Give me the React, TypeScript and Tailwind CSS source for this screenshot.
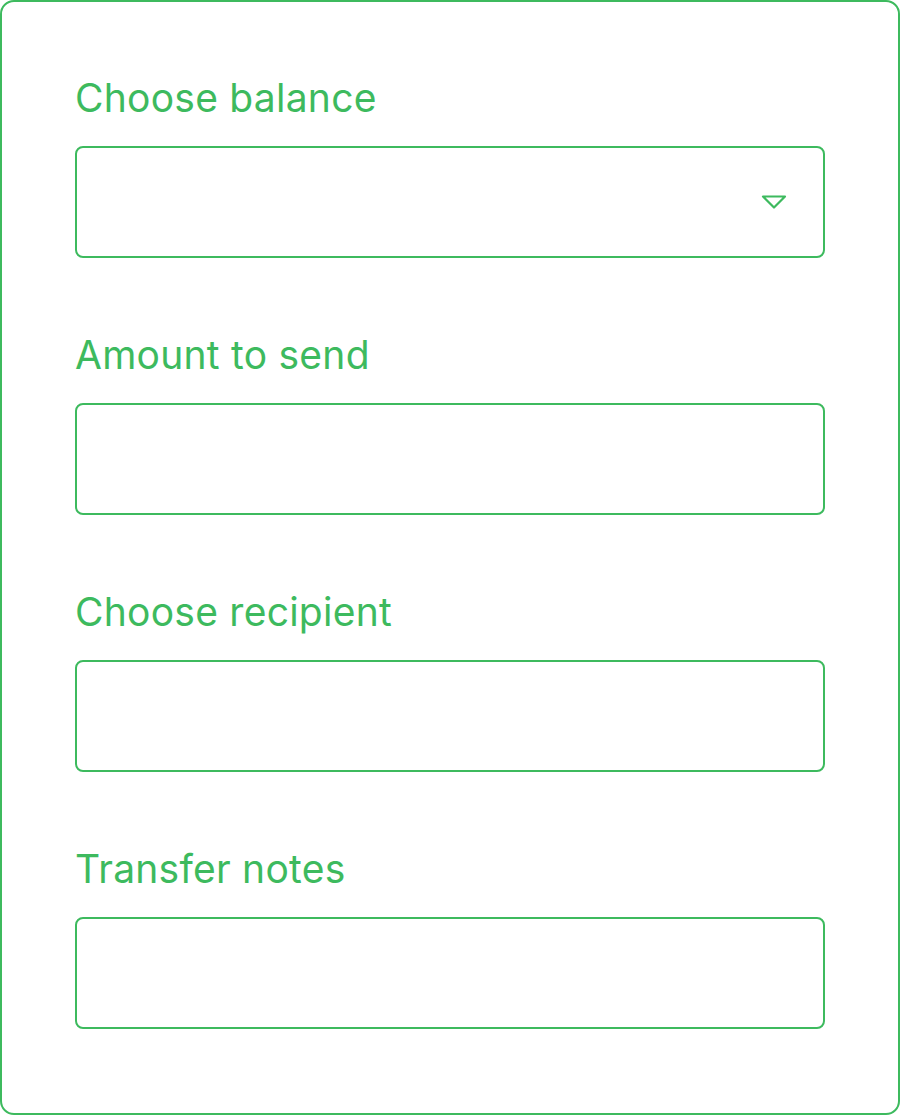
import React from "react";

const fields = [
  { label: "Choose balance", select: true },
  { label: "Amount to send", select: false },
  { label: "Choose recipient", select: false },
  { label: "Transfer notes", select: false },
];

function Caret() {
  return (
    <svg width="26" height="17" viewBox="0 0 26 17" fill="none">
      <path
        d="M2 2.5 H24 L13 13.5 Z"
        stroke="#3dba5e"
        strokeWidth="2.2"
        strokeLinejoin="round"
      />
    </svg>
  );
}

export default function App() {
  return (
    <div className="w-[900px] h-[1115px] bg-white" style={{ fontFamily: "Inter, 'Liberation Sans', sans-serif" }}>
      <div className="w-full h-full border-2 border-[#3dba5e] rounded-[14px] pl-[73px] pt-[72px] flex flex-col gap-[73px]">
        {fields.map((f) => (
          <div key={f.label} className="flex flex-col">
            <label className="text-[39px] leading-[48px] text-[#3dba5e] tracking-[0.25px] mb-[24px]">
              {f.label}
            </label>
            <div className="w-[750px] h-[112px] border-2 border-[#3dba5e] rounded-[8px] flex items-center justify-end pr-[36px]">
              {f.select && <Caret />}
            </div>
          </div>
        ))}
      </div>
    </div>
  );
}
